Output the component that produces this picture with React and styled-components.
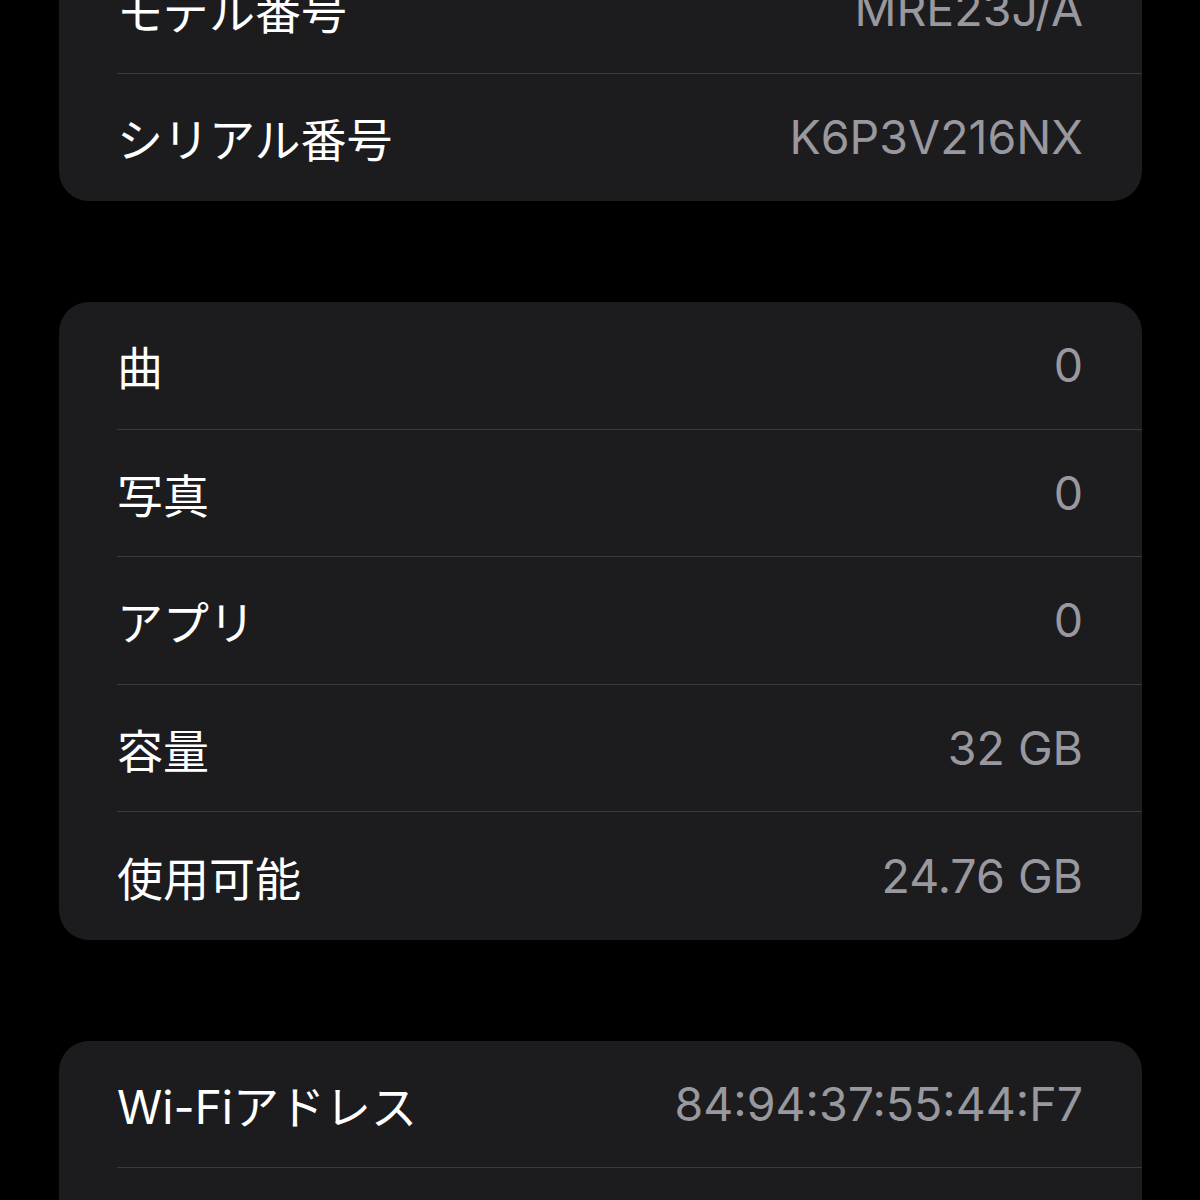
import React from "react";
import styled, { createGlobalStyle } from "styled-components";

const GlobalStyle = createGlobalStyle`
  html, body {
    margin: 0;
    padding: 0;
    background: #000000;
  }
  body {
    font-family: "Inter", "Noto Sans CJK JP", sans-serif;
    -webkit-font-smoothing: antialiased;
  }
`;

const Screen = styled.div`
  width: 1200px;
  height: 1200px;
  overflow: hidden;
  background: #000000;
  box-sizing: border-box;
  padding: 0 58px 0 59px;
`;

const List = styled.div`
  display: flex;
  flex-direction: column;
  gap: 101px;
  /* page is scrolled, first group is cut off */
  margin-top: -54px;
`;

const Group = styled.section`
  background: #1c1c1e;
  border-radius: 30px;
  overflow: hidden;
`;

const Row = styled.div`
  display: flex;
  align-items: center;
  justify-content: space-between;
  height: 127.5px;
  margin-left: 58px;
  padding-right: 59px;
  box-sizing: border-box;
  border-bottom: ${(p) => (p.$last ? "none" : "1.5px solid #3a3a3c")};
`;

const Label = styled.span`
  font-size: 46px;
  color: #ffffff;
`;

const Value = styled.span`
  font-size: 46.5px;
  color: #98989e;
`;

const groups = [
  [
    ["モデル番号", "MRE23J/A"],
    ["シリアル番号", "K6P3V216NX"],
  ],
  [
    ["曲", "0"],
    ["写真", "0"],
    ["アプリ", "0"],
    ["容量", "32 GB"],
    ["使用可能", "24.76 GB"],
  ],
  [
    ["Wi-Fiアドレス", "84:94:37:55:44:F7"],
    ["Bluetooth", "84:94:37:47:B5:B9"],
  ],
];

export default function App() {
  return (
    <>
      <GlobalStyle />
      <Screen>
        <List>
          {groups.map((rows, gi) => (
            <Group key={gi}>
              {rows.map(([label, value], ri) => (
                <Row key={label} $last={ri === rows.length - 1}>
                  <Label>{label}</Label>
                  <Value>{value}</Value>
                </Row>
              ))}
            </Group>
          ))}
        </List>
      </Screen>
    </>
  );
}
